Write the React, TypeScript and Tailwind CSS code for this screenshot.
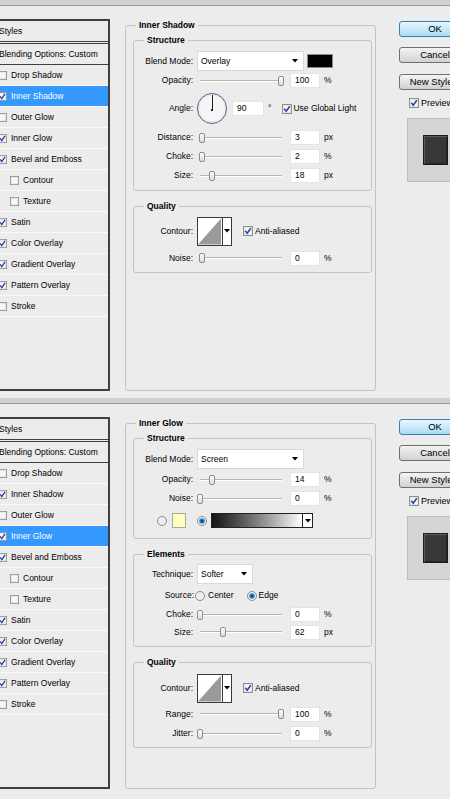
import clsx from 'clsx'
import type { ReactNode } from 'react'

type StyleItem = { label: string; on: boolean; indent?: boolean }

const styleItems: StyleItem[] = [
  { label: 'Drop Shadow', on: false },
  { label: 'Inner Shadow', on: true },
  { label: 'Outer Glow', on: false },
  { label: 'Inner Glow', on: true },
  { label: 'Bevel and Emboss', on: true },
  { label: 'Contour', on: false, indent: true },
  { label: 'Texture', on: false, indent: true },
  { label: 'Satin', on: true },
  { label: 'Color Overlay', on: true },
  { label: 'Gradient Overlay', on: true },
  { label: 'Pattern Overlay', on: true },
  { label: 'Stroke', on: false },
]

function Check({ on, size = 10 }: { on: boolean; size?: number }) {
  return (
    <svg width={size} height={size} viewBox="0 0 10 10" className="shrink-0">
      <rect x="0.5" y="0.5" width="9" height="9" fill="#f7f7f7" stroke="#8e8f8f" />
      <rect x="1.5" y="1.5" width="7" height="7" fill="none" stroke="#e2e4ea" />
      {on && <path d="M2.3 4.8 4.2 7.3 7.8 2.2" fill="none" stroke="#25409a" strokeWidth="1.5" />}
    </svg>
  )
}

function Radio({ on }: { on: boolean }) {
  return (
    <svg width="10" height="10" viewBox="0 0 10 10" className="shrink-0">
      <circle cx="5" cy="5" r="4.5" fill="#efefef" stroke="#8c8c8c" />
      {on && (
        <>
          <circle cx="5" cy="5" r="2.8" fill="#2a86d0" />
          <circle cx="5" cy="5" r="1.3" fill="#0d3f77" />
        </>
      )}
    </svg>
  )
}

function Arrow() {
  return (
    <svg width="6" height="4" viewBox="0 0 6 4" className="shrink-0">
      <path d="M0 0h6L3 3.5z" fill="#000" />
    </svg>
  )
}

function StylesList({ selected }: { selected: string }) {
  return (
    <div className="ml-[-5px] mt-[13px] h-[372px] w-[115px] shrink-0 border-2 border-[#3f3f3f] bg-[#ececec]">
      <div className="flex h-[23px] items-center border-b-[3px] border-double border-[#3f3f3f] pl-[2px]">Styles</div>
      <div className="flex h-[21px] items-center border-b border-[#3f3f3f] pl-[2px]">Blending Options: Custom</div>
      {styleItems.map((it) => {
        const active = it.label === selected
        return (
          <div
            key={it.label}
            className={clsx(
              'flex h-[21px] items-center gap-[4px] border-b border-[#f9f9f9]',
              it.indent ? 'pl-[13px]' : 'pl-[1px]',
              active && 'bg-[#3399ff] text-white'
            )}
          >
            <Check on={it.on} size={9} />
            <span>{it.label}</span>
          </div>
        )
      })}
    </div>
  )
}

function GroupBox({
  title,
  className,
  legendClass = 'ml-[10px]',
  children,
}: {
  title: string
  className?: string
  legendClass?: string
  children: ReactNode
}) {
  return (
    <fieldset className={clsx('rounded-[3px] border border-[#c3c3c3]', className)}>
      <legend className={clsx('px-[3px] text-[8.5px] font-bold leading-[12px]', legendClass)}>{title}</legend>
      {children}
    </fieldset>
  )
}

function Row({ label, className, children }: { label: string; className: string; children: ReactNode }) {
  return (
    <div className={clsx('flex items-center', className)}>
      <span className="w-[59px] shrink-0 text-right">{label}</span>
      <div className="ml-[4px] flex items-center">{children}</div>
    </div>
  )
}

function Select({ value, className }: { value: string; className: string }) {
  return (
    <div className={clsx('flex h-[20px] items-center justify-between border border-[#d8d8d8] bg-white pl-[3px] pr-[5px]', className)}>
      <span>{value}</span>
      <Arrow />
    </div>
  )
}

function NumBox({ value, className = 'ml-[4px] w-[30px]' }: { value: string; className?: string }) {
  return (
    <div className={clsx('flex h-[15px] items-center border border-[#e4e4e4] bg-white pl-[4px]', className)}>{value}</div>
  )
}

function Slider({ thumb }: { thumb: number }) {
  return (
    <div className="relative h-[12px] w-[89px]">
      <div className="absolute left-[3px] right-[4px] top-[5px] h-[2px] border-t border-b border-t-[#b4b4b4] border-b-white" />
      <div
        className="absolute top-[1px] h-[10px] w-[6px] rounded-[2px] border border-[#8c8c8c] bg-gradient-to-b from-white to-[#dcdcdc]"
        style={{ left: thumb }}
      />
    </div>
  )
}

function SliderRow({ label, thumb, value, unit, className }: { label: string; thumb: number; value: string; unit: string; className: string }) {
  return (
    <Row label={label} className={className}>
      <Slider thumb={thumb} />
      <NumBox value={value} />
      <span className="ml-[4px]">{unit}</span>
    </Row>
  )
}

function ContourBox() {
  return (
    <div className="flex h-[29px] w-[35px] border border-[#3a3a3a] bg-white">
      <svg width="25" height="27" viewBox="0 0 25 27" className="border-r border-[#3a3a3a]">
        <polygon points="0,27 24,0 24,27" fill="#9a9a9a" />
      </svg>
      <div className="flex flex-1 items-start justify-center pt-[11px]">
        <Arrow />
      </div>
    </div>
  )
}

function ShadowOptions() {
  return (
    <>
      <GroupBox title="Structure" className="mt-[3px] pb-[5px] pt-[4px]">
        <Row label="Blend Mode:" className="h-[22px]">
          <Select value="Overlay" className="w-[107px]" />
          <div className="ml-[3px] h-[14px] w-[26px] border border-[#8a8a8a] bg-black" />
        </Row>
        <SliderRow label="Opacity:" thumb={81} value="100" unit="%" className="h-[17px]" />
        <Row label="Angle:" className="h-[39px]">
          <div className="flex h-[31px] w-[30px] flex-col items-center rounded-full border border-[#56688c] bg-[#f6f6f6] shadow-[inset_0_0_3px_#c4c4c4]">
            <div className="mt-[1px] h-[14px] w-[1px] bg-[#1e1e1e]" />
            <div className="h-[2px] w-[2px] bg-[#1e1e1e]" />
          </div>
          <NumBox value="90" className="ml-[5px] w-[32px]" />
          <span className="ml-[4px]">°</span>
          <div className="ml-[11px] flex items-center gap-[1px]">
            <Check on />
            <span>Use Global Light</span>
          </div>
        </Row>
        <SliderRow label="Distance:" thumb={2} value="3" unit="px" className="h-[19px]" />
        <SliderRow label="Choke:" thumb={2} value="2" unit="%" className="h-[19px]" />
        <SliderRow label="Size:" thumb={12} value="18" unit="px" className="h-[19px]" />
      </GroupBox>
      <GroupBox title="Quality" className="mt-[9px] pb-[4px] pt-[4px]">
        <Row label="Contour:" className="h-[30px]">
          <ContourBox />
          <div className="ml-[11px] flex items-center gap-[2px]">
            <Check on />
            <span>Anti-aliased</span>
          </div>
        </Row>
        <SliderRow label="Noise:" thumb={2} value="0" unit="%" className="mt-[2px] h-[20px]" />
      </GroupBox>
    </>
  )
}

function GlowOptions() {
  return (
    <>
      <GroupBox title="Structure" className="mt-[3px] pb-[5px] pt-[4px]">
        <Row label="Blend Mode:" className="h-[22px]">
          <Select value="Screen" className="w-[107px]" />
        </Row>
        <SliderRow label="Opacity:" thumb={12} value="14" unit="%" className="h-[19px]" />
        <SliderRow label="Noise:" thumb={0} value="0" unit="%" className="h-[19px]" />
        <div className="flex h-[25px] items-center pl-[23px]">
          <Radio on={false} />
          <div className="ml-[5px] h-[15px] w-[14px] border border-[#a8a8a8] bg-[#ffffbe]" />
          <div className="ml-[11px]">
            <Radio on />
          </div>
          <div className="ml-[4px] flex h-[15px] w-[102px] border border-[#222] bg-white">
            <div className="flex-1 border-r border-[#222] bg-gradient-to-r from-[#151515] to-white" />
            <div className="flex w-[9px] items-center justify-center">
              <Arrow />
            </div>
          </div>
        </div>
      </GroupBox>
      <GroupBox title="Elements" className="mt-[9px] pb-[5px] pt-[3px]">
        <Row label="Technique:" className="h-[22px]">
          <Select value="Softer" className="w-[56px]" />
        </Row>
        <div className="flex h-[21px] items-center">
          <span className="w-[60px] shrink-0 text-right">Source:</span>
          <div className="ml-[1px]">
            <Radio on={false} />
          </div>
          <span className="ml-[3px]">Center</span>
          <div className="ml-[13px]">
            <Radio on />
          </div>
          <span className="ml-[2px]">Edge</span>
        </div>
        <SliderRow label="Choke:" thumb={0} value="0" unit="%" className="h-[17px]" />
        <SliderRow label="Size:" thumb={23} value="62" unit="px" className="h-[18px]" />
      </GroupBox>
      <GroupBox title="Quality" className="mt-[9px] pb-[4px] pt-[4px]">
        <Row label="Contour:" className="h-[32px]">
          <ContourBox />
          <div className="ml-[11px] flex items-center gap-[2px]">
            <Check on />
            <span>Anti-aliased</span>
          </div>
        </Row>
        <SliderRow label="Range:" thumb={81} value="100" unit="%" className="h-[20px]" />
        <SliderRow label="Jitter:" thumb={0} value="0" unit="%" className="h-[19px]" />
      </GroupBox>
    </>
  )
}

function Buttons() {
  const btn = 'flex h-[16px] w-[72px] items-center justify-center rounded-[3px] border text-[9.5px]'
  return (
    <div className="ml-[23px] mt-[15px] w-[72px] shrink-0">
      <div className={clsx(btn, 'border-[#3c7fb1] bg-gradient-to-b from-[#e8f6fd] to-[#a9dbf6]')}>OK</div>
      <div className={clsx(btn, 'mt-[10px] border-[#707070] bg-gradient-to-b from-[#f3f3f3] to-[#d2d2d2]')}>Cancel</div>
      <div className={clsx(btn, 'mt-[11px] border-[#707070] bg-gradient-to-b from-[#f3f3f3] to-[#d2d2d2]')}>New Style...</div>
      <div className="ml-[10px] mt-[8px] flex h-[10px] items-center gap-[2px] text-[9px]">
        <Check on />
        <span>Preview</span>
      </div>
      <div className="ml-[8px] mt-[10px] flex h-[64px] w-[56px] items-center justify-center border border-[#bdbdbd] bg-[#d5d5d5]">
        <div className="h-[30px] w-[25px] border border-[#1c1c1c] bg-[#383838] shadow-[inset_1px_1px_0_#5c5c5c,inset_-1px_-1px_0_#262626]" />
      </div>
    </div>
  )
}

function Panel({ title, selected, className }: { title: string; selected: string; className: string }) {
  return (
    <div className={className}>
      <div className="h-[6px] border-b border-[#999999] bg-[#d0d0d0]" />
      <div className="flex">
        <StylesList selected={selected} />
        <GroupBox
          title={title}
          legendClass="ml-[3px]"
          className="ml-[15px] mt-[13px] h-[372px] w-[251px] shrink-0 pl-[7px] pr-[3px]"
        >
          {selected === 'Inner Shadow' ? <ShadowOptions /> : <GlowOptions />}
        </GroupBox>
        <Buttons />
      </div>
    </div>
  )
}

export default function App() {
  return (
    <div className="h-[799px] w-[450px] overflow-hidden bg-[#ececec] font-['Liberation_Sans',Arial,sans-serif] text-[8.5px] leading-none text-black">
      <Panel title="Inner Shadow" selected="Inner Shadow" className="h-[398px]" />
      <Panel title="Inner Glow" selected="Inner Glow" className="h-[401px]" />
    </div>
  )
}
